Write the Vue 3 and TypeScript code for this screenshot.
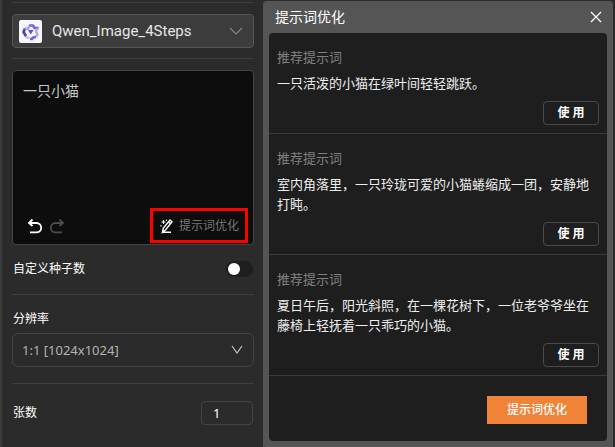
<script setup lang="ts">
import { ref } from 'vue'

interface Suggestion {
  id: number
  text: string
}

const model = ref('Qwen_Image_4Steps')
const prompt = ref('一只小猫')
const customSeed = ref(false)
const resolution = ref('1:1 [1024x1024]')
const count = ref('1')
const dialogOpen = ref(true)

const suggestions: Suggestion[] = [
  { id: 1, text: '一只活泼的小猫在绿叶间轻轻跳跃。' },
  { id: 2, text: '室内角落里，一只玲珑可爱的小猫蜷缩成一团，安静地打盹。' },
  { id: 3, text: '夏日午后，阳光斜照，在一棵花树下，一位老爷爷坐在藤椅上轻抚着一只乖巧的小猫。' },
]

function applySuggestion(item: Suggestion) {
  prompt.value = item.text
}
</script>

<template>
  <main class="page">
    <section class="settings">
      <div class="group model-group">
        <div class="model">
          <svg class="logo" viewBox="0 0 23 23" aria-hidden="true">
            <rect width="23" height="23" rx="2" fill="#f7f7fb" />
            <g fill="none" stroke-width="2.6" stroke-linejoin="round">
              <path d="M10 5.500h4l1.500 2.500h4" stroke="#7068e0" />
              <path d="M18.500 8.500l-1.500 3 1.500 3-1.500 2.500" stroke="#b3aff2" />
              <path d="M17 17l-3 .5-1 1.500h-2" stroke="#6d66df" />
              <path d="M10.500 17.500H7.500l-1.500-3" stroke="#c3c0f5" />
              <path d="M7 16l-2.500-4L6 8.500" stroke="#4a3fae" />
              <path d="M6 8.500l3 .2L10.500 6" stroke="#a7a2f0" />
            </g>
            <path d="M9 10h5.500l-2.700 4.500z" fill="#5b52d0" />
          </svg>
          <select v-model="model" class="model-select" aria-label="模型">
            <option>Qwen_Image_4Steps</option>
          </select>
          <svg class="chevron dim" viewBox="0 0 14 10" aria-hidden="true">
            <path d="M1 2l6 6 6-6" />
          </svg>
        </div>
      </div>

      <div class="group prompt-group">
        <div class="prompt">
          <textarea v-model="prompt" class="prompt-text" aria-label="提示词"></textarea>
          <div class="toolbar">
            <button class="icon-button" type="button" aria-label="撤销">
              <svg viewBox="0 0 16 16">
                <path d="M5.500 1.500L2 5l3.500 3M2.500 5H9.500a4.700 4.700 0 0 1 0 9.400H3" />
              </svg>
            </button>
            <button class="icon-button muted" type="button" aria-label="重做">
              <svg viewBox="0 0 16 16">
                <path d="M10.500 1.500L14 5l-3.500 3M13.500 5H6.500a4.700 4.700 0 0 0 0 9.400H13" />
              </svg>
            </button>
            <button class="optimize" type="button" @click="dialogOpen = true">
              <svg viewBox="0 0 14 16" aria-hidden="true">
                <path d="M10 2l2 1.800-6.500 8.200-3 2.300.7-4z" />
                <path d="M8.500 4l2 1.800M2 14.300H11" />
                <path d="M3.500 2v4M1.500 4h4M1 7v1.500M6.500 1.500v1.500" stroke-width="1.100" />
              </svg>
              <span>提示词优化</span>
            </button>
          </div>
        </div>
        <label class="row seed">
          <span>自定义种子数</span>
          <input v-model="customSeed" class="switch" type="checkbox" role="switch" />
        </label>
      </div>

      <div class="group resolution-group">
        <label class="caption" for="resolution">分辨率</label>
        <div class="resolution">
          <select id="resolution" v-model="resolution" class="resolution-select">
            <option>1:1 [1024x1024]</option>
          </select>
          <svg class="chevron" viewBox="0 0 14 10" aria-hidden="true">
            <path d="M2 1l5 7 5-7" />
          </svg>
        </div>
      </div>

      <label class="row count">
        <span>张数</span>
        <input v-model="count" class="count-input" type="text" inputmode="numeric" />
      </label>
    </section>

    <section v-if="dialogOpen" class="dialog" role="dialog" aria-labelledby="dialog-title">
      <header class="dialog-head">
        <h2 id="dialog-title">提示词优化</h2>
        <button class="close" type="button" aria-label="关闭" @click="dialogOpen = false">
          <svg viewBox="0 0 12 12"><path d="M1 1l10 10M11 1L1 11" /></svg>
        </button>
      </header>
      <div class="dialog-body">
        <article v-for="item in suggestions" :key="item.id" class="suggestion">
          <h3>推荐提示词</h3>
          <p>{{ item.text }}</p>
          <button class="use" type="button" @click="applySuggestion(item)">使 用</button>
        </article>
        <footer class="dialog-foot">
          <button class="primary" type="button">提示词优化</button>
        </footer>
      </div>
    </section>
  </main>
</template>

<style>
body {
  margin: 0;
  background: #2b2b2b;
}
</style>

<style scoped>
* {
  box-sizing: border-box;
}

.page {
  display: flex;
  min-height: 100vh;
  background: #2b2b2b;
  color: #fff;
  font-family: "Noto Sans", "Noto Sans CJK SC", sans-serif;
  font-size: 12px;
  line-height: 20px;
}

button,
input,
select,
textarea {
  margin: 0;
  padding: 0;
  border: 0;
  background: none;
  color: inherit;
  font: inherit;
  appearance: none;
}

button {
  cursor: pointer;
}

svg {
  display: block;
  flex: none;
  fill: none;
  stroke: currentColor;
}

.settings {
  flex: 0 0 263px;
  padding: 2px 9px 0 10px;
  border-left: 2px solid #3a3a3a;
}

.group {
  border-top: 1px solid #3e3e3e;
}

.model-group {
  padding: 11px 0 10px;
}

.model {
  position: relative;
  display: flex;
  align-items: center;
  height: 34px;
  padding-left: 6px;
  border: 1px solid #555;
  border-radius: 4px;
  background: #3c3c3c;
}

.logo {
  width: 23px;
  height: 23px;
  stroke: none;
}

.model-select {
  flex: 1;
  min-width: 0;
  height: 32px;
  padding: 0 28px 0 10px;
  color: #e6e6e6;
  font-family: Roboto, "Noto Sans CJK SC", sans-serif;
  font-size: 15px;
}

.chevron {
  position: absolute;
  right: 10px;
  width: 14px;
  height: 10px;
  color: #c4c4c4;
  stroke-width: 1.200;
  pointer-events: none;
}

.dim {
  color: #858585;
}

.prompt-group {
  padding-top: 11px;
}

.prompt {
  display: flex;
  flex-direction: column;
  height: 175px;
  border: 1px solid #444;
  border-radius: 4px;
  background: #0d0d0d;
}

.prompt-text {
  flex: 1;
  min-height: 0;
  padding: 10px;
  color: #c8c8c8;
  font-size: 14px;
  resize: none;
  outline: none;
}

.toolbar {
  display: flex;
  align-items: center;
  gap: 6px;
  padding: 0 5px 1px 14px;
}

.icon-button svg {
  width: 16px;
  height: 16px;
  stroke-width: 1.800;
}

.muted {
  color: #4c4c4c;
}

.optimize {
  display: flex;
  align-items: center;
  gap: 5px;
  height: 35px;
  margin-left: auto;
  padding: 0 6px 0 7px;
  border: 3px solid #f00;
  color: #777;
}

.optimize svg {
  width: 14px;
  height: 16px;
  color: #fff;
  stroke-width: 1.400;
}

.row {
  display: flex;
  align-items: center;
  justify-content: space-between;
}

.seed {
  padding: 14px 1px 15px;
}

.switch {
  width: 27px;
  height: 16px;
  padding: 2px;
  border-radius: 8px;
  background: #1e1e1e;
}

.switch::before {
  content: "";
  display: block;
  width: 12px;
  height: 12px;
  border-radius: 50%;
  background: #fff;
}

.switch:checked::before {
  margin-left: auto;
}

.resolution-group {
  padding: 14px 0 16px;
}

.caption {
  display: block;
  padding: 0 1px 4px;
}

.resolution {
  position: relative;
  display: flex;
  align-items: center;
}

.resolution-select {
  width: 100%;
  height: 34px;
  padding: 0 28px 0 9px;
  border: 1px solid #444;
  border-radius: 6px;
  color: #b4b4b4;
  font-size: 13px;
}

.count {
  padding: 17px 1px;
  border-top: 1px solid #3e3e3e;
}

.count-input {
  width: 52px;
  height: 24px;
  padding: 0 11px;
  border: 1px solid #444;
  border-radius: 4px;
  font-size: 13px;
}

.dialog {
  flex: 1;
  min-width: 0;
  margin: 1px 2px 0 0;
  padding: 0 6px 6px;
  border-radius: 4px 4px 0 0;
  background: #555;
}

.dialog-head {
  display: flex;
  align-items: center;
  justify-content: space-between;
  height: 32px;
  padding: 0 5px 0 6px;
}

h2,
h3,
p {
  margin: 0;
  font-weight: 400;
}

h2 {
  font-size: 14px;
}

.close svg {
  width: 12px;
  height: 12px;
  stroke-width: 1.300;
}

.dialog-body {
  border-radius: 4px;
  background: #1e1e1e;
}

.suggestion {
  display: flex;
  flex-direction: column;
  gap: 6px;
  padding: 14px 8px 8px;
  border-bottom: 1px solid #3a3a3a;
  font-size: 13px;
}

h3 {
  color: #808080;
  font-size: 13px;
}

p {
  color: #eee;
}

.use {
  align-self: flex-end;
  width: 56px;
  height: 24px;
  margin-top: 2px;
  border: 1px solid #4a4a4a;
  border-radius: 4px;
  font-size: 12px;
  font-weight: 700;
}

.dialog-foot {
  display: flex;
  justify-content: flex-end;
  padding: 20px 20px 17px;
}

.primary {
  width: 100px;
  height: 28px;
  background: #f08337;
  font-weight: 500;
}
</style>
